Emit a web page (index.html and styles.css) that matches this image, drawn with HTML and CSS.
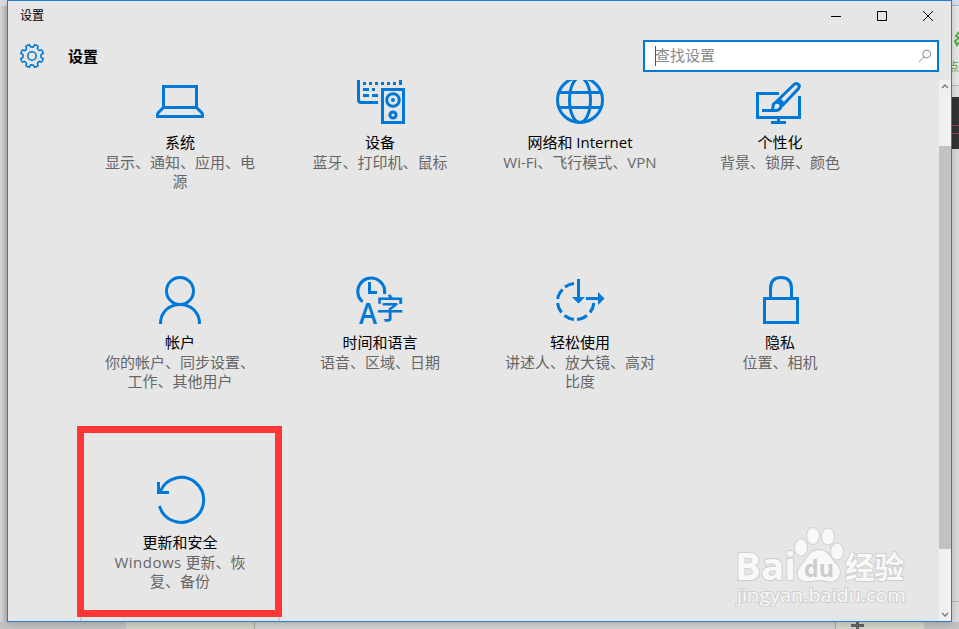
FILE: index.html
```html
<!DOCTYPE html>
<html lang="zh-CN">
<head>
    <meta charset="UTF-8">
    <meta name="viewport" content="width=device-width, initial-scale=1.0">
    <title>设置</title>
    <link rel="stylesheet" href="styles.css">
</head>
<body>
    <!-- Desktop behind the window -->
    <div class="desktop">
        <div class="desk-side"></div>
        <div class="desk-right">
            <div class="desk-tab"></div>
            <div class="desk-page">
                <svg class="green-glyph" width="7" height="16" viewBox="0 0 7 16"><path d="M7 1L4 5L7 7L3 10L5 14L7 11"/></svg>
                <span class="green-text">点</span>
            </div>
            <div class="desk-photo"></div>
        </div>
        <div class="desk-floor"></div>
        <div class="desk-bottom"><span class="plus"></span></div>
    </div>

    <div class="window">
        <div class="title-bar">
            <span class="title-text">设置</span>
            <div class="window-buttons">
                <svg width="46" height="30" viewBox="0 0 46 30"><path d="M18 15.5H28"/></svg>
                <svg width="46" height="30" viewBox="0 0 46 30"><path d="M18.5 10.5H27.5V19.5H18.5Z"/></svg>
                <svg class="close" width="46" height="30" viewBox="0 0 46 30"><path d="M18 10L28 20M28 10L18 20"/></svg>
            </div>
        </div>

        <div class="header">
            <svg class="gear" width="26" height="26" viewBox="-13 -13 26 26">
                <path d="M-2.3 -8.7L-1.7 -11.4H1.7L2.3 -8.7L4.5 -7.8L6.9 -9.3L9.3 -6.9L7.8 -4.5L8.7 -2.3L11.4 -1.7V1.7L8.7 2.3L7.8 4.5L9.3 6.9L6.9 9.3L4.5 7.8L2.3 8.7L1.7 11.4H-1.7L-2.3 8.7L-4.5 7.8L-6.9 9.3L-9.3 6.9L-7.8 4.5L-8.7 2.3L-11.4 1.7V-1.7L-8.7 -2.3L-7.8 -4.5L-9.3 -6.9L-6.9 -9.3L-4.5 -7.8Z" transform="rotate(22.5)"/>
                <circle r="4.2"/>
            </svg>
            <h1 class="header-title">设置</h1>
            <div class="search">
                <span class="caret"></span>
                <span class="placeholder">查找设置</span>
                <svg class="search-icon" width="14" height="14" viewBox="0 0 14 14"><circle cx="8.7" cy="5" r="3.9"/><path d="M6 7.9L1 12.8"/></svg>
            </div>
        </div>

        <div class="content">
            <div class="tiles">
                <div class="tile">
                    <svg class="icon" viewBox="0 0 48 48"><path d="M7.5 10.5H40.5V31.5H7.5ZM7.5 31.5L2 37Q1 38.5 1.5 40.5H46.5Q47 38.5 46 37L40.5 31.5"/></svg>
                    <h2>系统</h2>
                    <p>显示、通知、应用、电源</p>
                </div>
                <div class="tile">
                    <svg class="icon" viewBox="0 0 48 48">
                        <path d="M2.5 0V24Q2.5 26.5 5 26.5H22"/>
                        <path d="M7 7.5H41" stroke-dasharray="3 3"/>
                        <path d="M44.5 0V9"/>
                        <path d="M7 13.5H13M16 13.5H19M7 19.5H13M16 19.5H22"/>
                        <path d="M26.5 13.5H47.5V46.5H26.5Z"/>
                        <circle cx="37" cy="24" r="6.3"/>
                        <circle cx="37" cy="39" r="3.1"/>
                        <circle class="solid" cx="37" cy="24" r="2"/>
                    </svg>
                    <h2>设备</h2>
                    <p>蓝牙、打印机、鼠标</p>
                </div>
                <div class="tile">
                    <svg class="icon" viewBox="0 0 48 48"><circle cx="24" cy="24" r="22.5"/><ellipse cx="24" cy="24" rx="10.5" ry="22.5"/><path d="M3 16.5H45M3 31.5H45"/></svg>
                    <h2>网络和 Internet</h2>
                    <p>Wi-Fi、飞行模式、VPN</p>
                </div>
                <div class="tile">
                    <svg class="icon" viewBox="0 0 48 48">
                        <path d="M23 17.5H1.500V41.5H43.5V20M22.5 41V46M15 46.5H30M6 34.5H17"/>
                        <path d="M16 34.5C18 32 16 29 18 27.5C21 25 25 27 25 30C25 33 22 35 16 34.5M20 26L38 8.5C40.500 6 45 9 42.500 12.5L26 30M23 23L28 28"/>
                    </svg>
                    <h2>个性化</h2>
                    <p>背景、锁屏、颜色</p>
                </div>
                <div class="tile">
                    <svg class="icon" viewBox="0 0 48 48"><circle cx="24" cy="15" r="13.5"/><path d="M4.5 48C4.5 36 13 28.5 24 28.5S43.5 36 43.5 48"/></svg>
                    <h2>帐户</h2>
                    <p>你的帐户、同步设置、工作、其他用户</p>
                </div>
                <div class="tile">
                    <svg class="icon" viewBox="0 0 48 48">
                        <path d="M6.5 25.8A13.5 13.5 0 1 1 28.5 18"/>
                        <path d="M13.500 6V16.5H21"/>
                        <text class="letter-a" x="3" y="48" textLength="18" lengthAdjust="spacingAndGlyphs">A</text>
                        <text class="letter-zi" x="20" y="43">字</text>
                    </svg>
                    <h2>时间和语言</h2>
                    <p>语音、区域、日期</p>
                </div>
                <div class="tile">
                    <svg class="icon" viewBox="0 0 48 48">
                        <path d="M18 7.600A18 18 0 0 0 9 11M6.500 13.5A18 18 0 0 0 1.6 23M1.6 27A18 18 0 0 0 5.5 36.5M8.5 39.5A18 18 0 0 0 18 43.4M21 43.4A18 18 0 0 0 31 39.5M34 36.5A18 18 0 0 0 37.8 27"/>
                        <path d="M22.5 3V23M30 22.5H43"/>
                        <path class="solid" d="M16 21H29L22.5 27.5ZM42 16L48.5 22.5L42 29Z"/>
                    </svg>
                    <h2>轻松使用</h2>
                    <p>讲述人、放大镜、高对比度</p>
                </div>
                <div class="tile">
                    <svg class="icon" viewBox="0 0 48 48"><path d="M8.5 22.5H41.5V46.5H8.5ZM14.5 22V12.5Q14.5 1.5 25 1.5T35.5 12.5V22"/></svg>
                    <h2>隐私</h2>
                    <p>位置、相机</p>
                </div>
                <div class="tile hover">
                    <svg class="icon" viewBox="0 0 48 48"><path d="M3.5 30A22.5 22.5 0 1 0 4.5 15M2.500 6V16.500H13"/></svg>
                    <h2>更新和安全</h2>
                    <p><span class="latin">Windows</span> 更新、恢复、备份</p>
                </div>
            </div>
            <div class="scrollbar">
                <svg width="12" height="12" viewBox="0 0 12 12"><path d="M3 8L6 5L9 8"/></svg>
                <div class="thumb"></div>
                <svg width="12" height="12" viewBox="0 0 12 12"><path d="M3 4L6 7L9 4"/></svg>
            </div>
        </div>
    </div>

    <div class="highlight"></div>

    <svg class="watermark" width="180" height="90" viewBox="0 0 180 90">
        <g class="paw">
            <ellipse cx="79" cy="25.5" rx="6" ry="8"/>
            <ellipse cx="91" cy="14" rx="6" ry="8"/>
            <ellipse cx="106" cy="14.500" rx="6" ry="8"/>
            <ellipse cx="115" cy="29.500" rx="6" ry="8"/>
            <path d="M97 28C106 28 109 37 115 43C122 52 115 62 105 59Q97 57 89 59C77 61 72 52 79 44C85 37 88 28 97 28Z"/>
        </g>
        <text class="wm-bai" x="13" y="58" textLength="61" lengthAdjust="spacingAndGlyphs">Bai</text>
        <text class="wm-du" x="82" y="55" textLength="30" lengthAdjust="spacingAndGlyphs">du</text>
        <text class="wm-cn" x="123" y="56" textLength="59" lengthAdjust="spacingAndGlyphs">经验</text>
        <text class="wm-url" x="15" y="80" textLength="169" lengthAdjust="spacingAndGlyphs">jingyan.baidu.com</text>
    </svg>
</body>
</html>
```

FILE: styles.css
```css
* {
    margin: 0;
    padding: 0;
    box-sizing: border-box;
}

body {
    width: 959px;
    height: 629px;
    overflow: hidden;
    position: relative;
    background: #dcdcdc;
    font-family: "Open Sans", "Noto Sans CJK SC", sans-serif;
    font-size: 15px;
    color: #000;
}

/* Desktop strips that show around the window */
.desktop > div {
    position: absolute;
}

.desk-side {
    left: 0;
    top: 6px;
    width: 7px;
    height: 623px;
    background: linear-gradient(90deg, #d9d9d9, #bababa);
}

.desk-right {
    left: 952px;
    top: 0;
    width: 7px;
    height: 602px;
    background: #dadada;
    border-bottom: 1px solid #bbb;
    overflow: hidden;
}

.desk-tab {
    height: 6px;
    background: #d3dff0;
    border-bottom: 1px solid #b5b5b5;
}

.desk-page {
    height: 91px;
    background: linear-gradient(#e8e8e8 0 79px, #bbb 79px 80px, #e0e0e0 80px);
    color: #4caf3f;
    font-size: 11px;
    display: flex;
    flex-direction: column;
    padding-top: 25px;
    gap: 11px;
    line-height: 18px;
}

.green-glyph {
    fill: none;
    stroke: #4caf3f;
    stroke-width: 2;
}

.green-text {
    margin-left: -4px;
}

.desk-photo {
    height: 52px;
    background: linear-gradient(#333 0 28px, #b03550 28px 29px, #333 29px 36px, #b03550 36px 37px, #333 37px);
}

.desk-floor {
    left: 0;
    top: 622px;
    width: 959px;
    height: 7px;
    background: #c4c4c4;
}

.desk-bottom {
    left: 126px;
    top: 622px;
    width: 798px;
    height: 7px;
    background: linear-gradient(90deg, #d4d4c9 0 128px, #aaa 128px 129px, #d3d3d3 129px 709px, #aaa 709px 710px, #d8d8cd 710px);
    display: flex;
    justify-content: flex-end;
}

.plus {
    width: 13px;
    height: 7px;
    margin-right: 60px;
    background: linear-gradient(#666, #666) center 0 / 3px 7px no-repeat, linear-gradient(#666, #666) 0 2px / 13px 3px no-repeat;
}

/* Settings window */
.window {
    position: absolute;
    left: 7px;
    top: 0;
    width: 945px;
    height: 622px;
    background: #e6e6e6;
    border: 1px solid #1f7fd0;
    box-shadow: 0 2px 8px rgba(0, 0, 0, 0.2);
    display: flex;
    flex-direction: column;
}

.title-bar {
    height: 30px;
    display: flex;
    justify-content: space-between;
    padding-left: 12px;
}

.title-text {
    font-size: 12px;
    line-height: 30px;
}

.window-buttons {
    display: flex;
}

.window-buttons path {
    fill: none;
    stroke: #000;
    stroke-width: 1;
}

.header {
    height: 49px;
    display: flex;
    align-items: center;
    padding: 0 12px 0 11px;
}

.gear {
    fill: none;
    stroke: #0078d7;
    stroke-width: 1.6;
}

.header-title {
    margin-left: 23px;
    font-size: 15px;
    font-weight: 600;
    flex: 1;
}

.search {
    width: 296px;
    height: 32px;
    border: 2px solid #0078d7;
    background: #fff;
    display: flex;
    align-items: center;
    padding: 0 5px 0 10px;
    color: #8a8a8a;
}

.caret {
    width: 1px;
    height: 20px;
    margin-right: -1px;
    background: #555;
}

.placeholder {
    flex: 1;
    line-height: 26px;
    padding-bottom: 2px;
}

.search-icon {
    fill: none;
    stroke: #8a8a8a;
    stroke-width: 1;
}

.content {
    flex: 1;
    min-height: 0;
    display: flex;
    justify-content: space-between;
    overflow: hidden;
}

.tiles {
    display: grid;
    grid-template-columns: repeat(4, 200px);
    grid-auto-rows: 200px;
    margin: -54px 0 0 72px;
}

.tile {
    padding-top: 50px;
    display: flex;
    flex-direction: column;
    align-items: center;
    text-align: center;
}

.tile.hover {
    box-shadow: inset 0 0 0 2px #cfcfcf;
}

.icon {
    width: 48px;
    height: 48px;
    overflow: visible;
    fill: none;
    stroke: #0078d7;
    stroke-width: 3;
}

.icon .solid {
    fill: #0078d7;
    stroke: none;
}

.icon text {
    fill: #0078d7;
    stroke: none;
}

.letter-a {
    font: 600 29px "Open Sans", sans-serif;
}

.letter-zi {
    font: 500 28px "Noto Sans CJK SC", sans-serif;
}

.tile h2 {
    margin-top: 8px;
    font-size: 15px;
    font-weight: 400;
    line-height: 20px;
}

.tile p {
    width: 160px;
    margin-top: 1px;
    color: #666;
    line-height: 19px;
}

.latin {
    letter-spacing: 0.5px;
}

.scrollbar {
    width: 12px;
    background: #f0f0f0;
    display: flex;
    flex-direction: column;
    justify-content: space-between;
}

.scrollbar path {
    fill: none;
    stroke: #777;
    stroke-width: 1.3;
}

.thumb {
    height: 403px;
    margin-top: 54px;
    margin-bottom: auto;
    background: #c2c2c2;
}

/* Red frame around the update tile */
.highlight {
    position: absolute;
    left: 77px;
    top: 426px;
    width: 205px;
    height: 191px;
    border: 7px solid #fe3636;
}

.watermark {
    position: absolute;
    left: 722px;
    top: 522px;
    overflow: visible;
    fill: #f8f8f8;
    stroke: #cfcfcf;
    stroke-width: 2;
    paint-order: stroke;
}

.wm-bai {
    font: 700 38px "Open Sans", sans-serif;
}

.wm-du {
    font: 700 24px "Open Sans", sans-serif;
    fill: #ccc;
    stroke: none;
}

.wm-cn {
    font: 700 30px "Noto Sans CJK SC", sans-serif;
}

.wm-url {
    font: 400 19px "Open Sans", sans-serif;
}
```
